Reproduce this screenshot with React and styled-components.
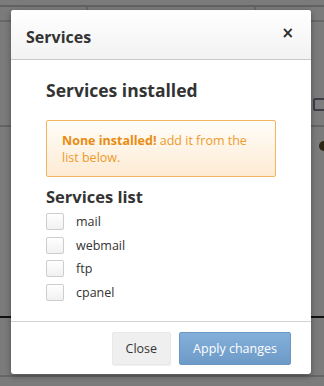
import React, { useState } from "react";
import styled, { createGlobalStyle } from "styled-components";

const colors = {
  text: "#333333",
  orange: "#ee9a2c",
  orangeDark: "#e88c12",
  orangeBorder: "#f4b562",
  blue: "#77a3d0",
};

const services = ["mail", "webmail", "ftp", "cpanel"];

export default function App() {
  const [checked, setChecked] = useState({});

  const toggle = (name) => setChecked((c) => ({ ...c, [name]: !c[name] }));

  return (
    <>
      <GlobalStyle />
      <Page>
        <TopStrip />
        <TabRow>
          <TabCell $w={88} />
          <TabCell $w={168} />
          <TabCell $w={68} $last />
        </TabRow>
        <ToolArea>
          <PageCheck />
        </ToolArea>
        <TableArea>
          <RowGlyph />
        </TableArea>
        <LowerArea />
        <Backdrop />

        <Modal>
          <ModalHeader>
            <ModalTitle>Services</ModalTitle>
            <CloseX type="button">×</CloseX>
          </ModalHeader>

          <ModalBody>
            <SectionTitle>Services installed</SectionTitle>
            <Alert>
              <strong>None installed!</strong> add it from the list below.
            </Alert>

            <ListTitle>Services list</ListTitle>
            {services.map((name) => (
              <ServiceRow key={name} onClick={() => toggle(name)}>
                <CheckBox $on={!!checked[name]} />
                <ServiceLabel>{name}</ServiceLabel>
              </ServiceRow>
            ))}
          </ModalBody>

          <ModalFooter>
            <Button type="button">Close</Button>
            <Button type="button" $primary>
              Apply changes
            </Button>
          </ModalFooter>
        </Modal>
      </Page>
    </>
  );
}

const GlobalStyle = createGlobalStyle`
  html, body {
    margin: 0;
    padding: 0;
    background: #7b7b7b;
  }
  body {
    font-family: "Open Sans", "DejaVu Sans", sans-serif;
    color: ${colors.text};
  }
  * {
    box-sizing: border-box;
  }
`;

const Page = styled.div`
  position: relative;
  width: 324px;
  height: 386px;
  overflow: hidden;
  background: #f6f6f6;
  display: flex;
  flex-direction: column;
`;

const TopStrip = styled.div`
  height: 7px;
  border-bottom: 2px solid #c4c4c4;
`;

const TabRow = styled.div`
  display: flex;
  height: 15px;
  border-bottom: 2px solid #cfcfcf;
`;

const TabCell = styled.div`
  width: ${(p) => p.$w}px;
  border-right: ${(p) => (p.$last ? "none" : "2px solid #d0d0d0")};
`;

const ToolArea = styled.div`
  height: 105px;
  border-bottom: 2px solid #c8c8c8;
  display: flex;
  justify-content: flex-end;
  align-items: flex-start;
  padding-top: 76px;
`;

const PageCheck = styled.div`
  width: 13px;
  height: 13px;
  margin-right: -2px;
  border: 2px solid #7c7c8c;
  border-radius: 2px;
  background: #fafafa;
`;

const TableArea = styled.div`
  height: 191px;
  border-bottom: 2px solid #222222;
  display: flex;
  justify-content: flex-end;
  padding-top: 14px;
`;

const RowGlyph = styled.span`
  width: 10px;
  height: 10px;
  border-radius: 50%;
  background: #5a4a2a;
  margin-right: -5px;
`;

const LowerArea = styled.div`
  height: 59px;
  border-bottom: 2px solid #cccccc;
`;

const Backdrop = styled.div`
  position: absolute;
  inset: 0;
  background: rgba(0, 0, 0, 0.5);
`;

const Modal = styled.div`
  position: absolute;
  left: 11px;
  top: 10px;
  width: 300px;
  background: #ffffff;
  border-radius: 3px;
  box-shadow: 0 2px 6px rgba(0, 0, 0, 0.35);
  display: flex;
  flex-direction: column;
  overflow: hidden;
`;

const ModalHeader = styled.div`
  height: 50px;
  padding: 0 17px 0 15px;
  display: flex;
  align-items: center;
  justify-content: space-between;
  background: linear-gradient(#ffffff, #f2f2f2);
  border-bottom: 1px solid #c9c9c9;
`;

const ModalTitle = styled.div`
  font-size: 16px;
  font-weight: 700;
  color: #333;
  padding-top: 4px;
`;

const CloseX = styled.button`
  border: none;
  background: transparent;
  padding: 0;
  font-family: "DejaVu Sans", sans-serif;
  font-size: 15px;
  font-weight: 700;
  line-height: 1;
  color: #2b2b2b;
  margin-top: -2px;
`;

const ModalBody = styled.div`
  height: 261px;
  padding: 20px 35px 0 35px;
  display: flex;
  flex-direction: column;
`;

const SectionTitle = styled.div`
  font-size: 17.5px;
  font-weight: 700;
  line-height: 20px;
  color: #333;
  margin-bottom: 20px;
`;

const Alert = styled.div`
  height: 57px;
  padding: 11px 15px;
  border: 1px solid ${colors.orangeBorder};
  border-radius: 2px;
  background: linear-gradient(#fffdf9, #fdebd4);
  color: ${colors.orange};
  font-size: 12.5px;
  line-height: 17px;

  strong {
    color: ${colors.orangeDark};
    font-weight: 700;
  }
`;

const ListTitle = styled.div`
  font-size: 16.5px;
  font-weight: 700;
  line-height: 22px;
  color: #333;
  margin: 9px 0 2px;
`;

const ServiceRow = styled.div`
  height: 23.6px;
  display: flex;
  align-items: center;
  gap: 12px;
  cursor: pointer;
`;

const CheckBox = styled.span`
  width: 18px;
  height: 17px;
  border: 1px solid #cdcdcd;
  border-radius: 2px;
  background: ${(p) =>
    p.$on ? colors.blue : "linear-gradient(#ffffff, #f1f1f1)"};
`;

const ServiceLabel = styled.span`
  font-size: 12.5px;
  color: #333;
`;

const ModalFooter = styled.div`
  border-top: 1px solid #d2d2d2;
  padding: 10px 20px 9px;
  display: flex;
  justify-content: flex-end;
  gap: 8px;
`;

const Button = styled.button`
  height: 33px;
  padding: 0 13px;
  font-family: "Open Sans", sans-serif;
  font-size: 12.5px;
  border-radius: 2px;
  border: 1px solid ${(p) => (p.$primary ? "#6a96c4" : "#e8e8e8")};
  background: ${(p) =>
    p.$primary ? "linear-gradient(#83afdb, #6e9ac7)" : "#efefef"};
  color: ${(p) => (p.$primary ? "#ffffff" : "#333333")};
  box-shadow: ${(p) =>
    p.$primary ? "none" : "0 1px 1px rgba(0, 0, 0, 0.06)"};
`;
